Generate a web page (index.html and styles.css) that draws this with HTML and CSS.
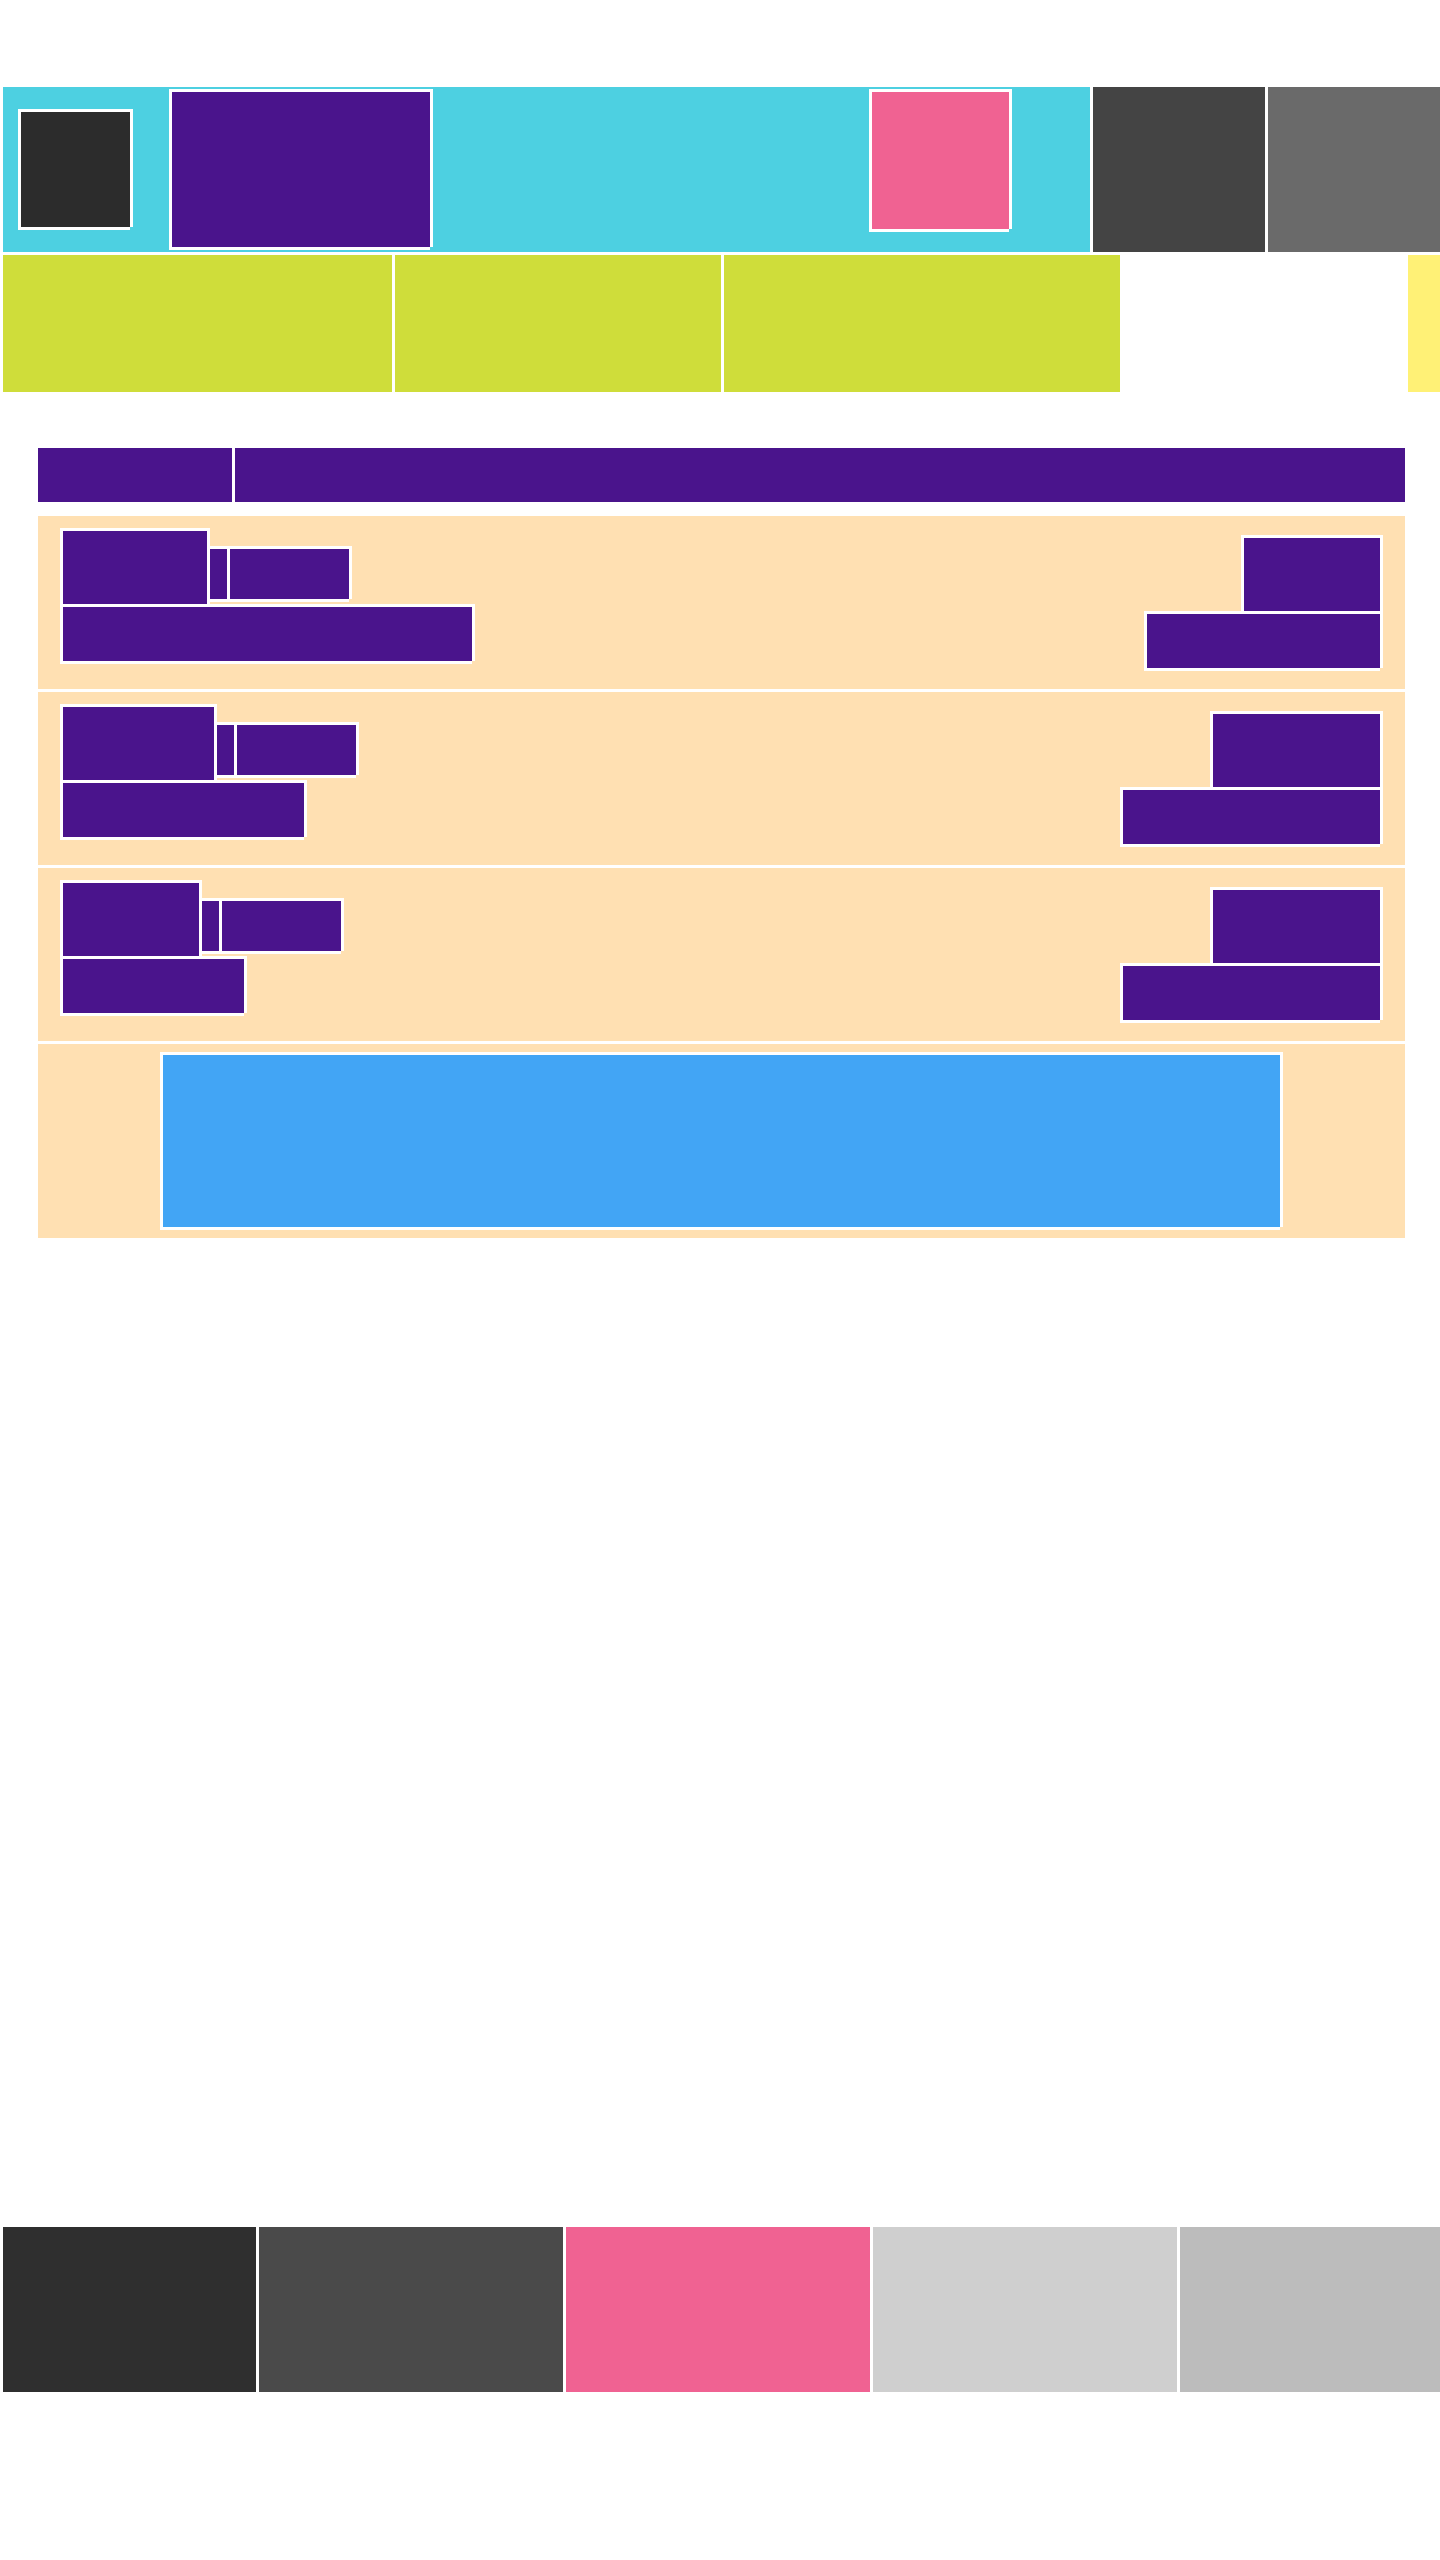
FILE: index.html
```html
<!DOCTYPE html>
<html lang="en">
<head>
<meta charset="utf-8">
<title>Wireframe</title>
<link rel="stylesheet" href="styles.css">
</head>
<body>
<header class="topbar">
  <div class="brand-bar">
    <div class="logo o"></div>
    <div class="brand o"></div>
    <div class="avatar o"></div>
  </div>
  <div class="action action-dark"></div>
  <div class="action action-gray"></div>
</header>
<nav class="subnav">
  <div class="nav-item nav-a"></div>
  <div class="nav-item nav-b"></div>
  <div class="nav-item nav-c"></div>
  <div class="nav-flag"></div>
</nav>
<main class="content">
  <div class="tabs">
    <div class="tab tab-first"></div>
    <div class="tab tab-rest"></div>
  </div>
  <div class="list">
    <div class="card">
      <div class="card-main">
        <div class="title-row">
          <div class="title o t1"></div>
          <div class="sep o"></div>
          <div class="meta o"></div>
        </div>
        <div class="sub o s1"></div>
      </div>
      <div class="card-side">
        <div class="price o p1"></div>
        <div class="status o st1"></div>
      </div>
    </div>
    <div class="card">
      <div class="card-main">
        <div class="title-row">
          <div class="title o t2"></div>
          <div class="sep o"></div>
          <div class="meta o"></div>
        </div>
        <div class="sub o s2"></div>
      </div>
      <div class="card-side">
        <div class="price o p2"></div>
        <div class="status o st2"></div>
      </div>
    </div>
    <div class="card">
      <div class="card-main">
        <div class="title-row">
          <div class="title o t3"></div>
          <div class="sep o"></div>
          <div class="meta o"></div>
        </div>
        <div class="sub o s3"></div>
      </div>
      <div class="card-side">
        <div class="price o p2"></div>
        <div class="status o st2"></div>
      </div>
    </div>
    <div class="card card-cta">
      <div class="cta o"></div>
    </div>
  </div>
</main>
<footer class="footer">
  <div class="foot f1"></div>
  <div class="foot f2"></div>
  <div class="foot f3"></div>
  <div class="foot f4"></div>
  <div class="foot f5"></div>
</footer>
</body>
</html>
```
FILE: styles.css
```css
html, body {
  margin: 0;
  padding: 0;
  background: #ffffff;
  font-family: "Liberation Sans", Arial, sans-serif;
  overflow-x: hidden;
}
body {
  min-height: 2560px;
}
.o {
  box-shadow: -3px -3px 0 #fff, 3px -3px 0 #fff, -3px 3px 0 #fff, 3px 0 0 #fff, 0 3px 0 #fff;
}

/* top bar */
.topbar {
  display: flex;
  gap: 3px;
  margin: 87px 0 0 3px;
  height: 165px;
}
.brand-bar {
  width: 1087px;
  background: #4dd0e1;
  display: flex;
  align-items: flex-start;
}
.logo {
  width: 109px;
  height: 115px;
  margin: 25px 0 0 18px;
  background: #2c2c2c;
}
.brand {
  width: 258px;
  height: 155px;
  margin: 5px 0 0 42px;
  background: #4a148c;
}
.avatar {
  width: 137px;
  height: 137px;
  margin: 5px 0 0 442px;
  background: #f06292;
}
.action {
  width: 172px;
}
.action-dark { background: #444444; }
.action-gray { background: #6a6a6a; }

/* sub nav */
.subnav {
  display: flex;
  gap: 3px;
  margin: 3px 0 0 3px;
  height: 137px;
}
.nav-item { background: #cfdd3a; }
.nav-a { width: 389px; }
.nav-b { width: 326px; }
.nav-c { width: 396px; }
.nav-flag {
  width: 32px;
  margin-left: 285px;
  background: #fff176;
}

/* content */
.content {
  margin-left: 38px;
  width: 1367px;
}
.tabs {
  display: flex;
  gap: 3px;
  margin-top: 56px;
  height: 54px;
}
.tab { background: #4a148c; }
.tab-first { width: 194px; }
.tab-rest { flex: 1; }

.list {
  margin-top: 14px;
  display: flex;
  flex-direction: column;
  gap: 3px;
}
.card {
  display: flex;
  align-items: flex-start;
  box-sizing: border-box;
  height: 173px;
  padding: 0 25px;
  background: #ffe0b2;
}
.card-main {
  margin-top: 15px;
  display: flex;
  flex-direction: column;
  align-items: flex-start;
  gap: 3px;
}
.title-row {
  display: flex;
  align-items: flex-start;
  gap: 3px;
}
.title { height: 73px; background: #4a148c; }
.t1 { width: 144px; }
.t2 { width: 151px; }
.t3 { width: 136px; }
.sep {
  width: 17px;
  height: 50px;
  margin-top: 18px;
  background: #4a148c;
}
.meta {
  width: 119px;
  height: 50px;
  margin-top: 18px;
  background: #4a148c;
}
.sub { height: 54px; background: #4a148c; }
.s1 { width: 409px; }
.s2 { width: 241px; }
.s3 { width: 181px; }

.card-side {
  margin-left: auto;
  margin-top: 22px;
  display: flex;
  flex-direction: column;
  align-items: flex-end;
  gap: 3px;
}
.price { height: 73px; background: #4a148c; }
.p1 { width: 136px; }
.p2 { width: 167px; }
.status { height: 54px; background: #4a148c; }
.st1 { width: 233px; }
.st2 { width: 257px; }

.card-cta {
  height: 194px;
  padding-top: 11px;
  justify-content: center;
}
.cta {
  width: 1117px;
  height: 172px;
  background: #42a5f5;
}

/* footer */
.footer {
  display: flex;
  gap: 3px;
  margin: 989px 0 0 3px;
  height: 165px;
}
.f1 { width: 253px; background: #2f2f2f; }
.f2 { width: 304px; background: #4a4a4a; }
.f3 { width: 304px; background: #f06292; }
.f4 { width: 304px; background: #cfcfcf; }
.f5 { flex: 1; background: #bcbcbc; }
```
